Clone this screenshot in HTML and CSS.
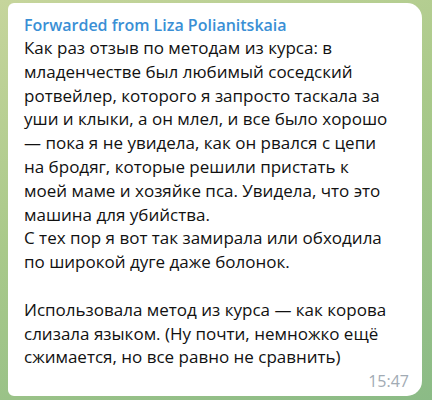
FILE: index.html
```html
<!DOCTYPE html>
<html lang="ru">
<head>
<meta charset="utf-8">
<link rel="stylesheet" href="styles.css">
</head>
<body>
<div class="bubble">
  <div class="fwd">Forwarded from Liza Polianitskaia</div>
  <div class="text">Как раз отзыв по методам из курса: в<br>младенчестве был любимый соседский<br>ротвейлер, которого я запросто таскала за<br>уши и клыки, а он млел, и все было хорошо<br>— пока я не увидела, как он рвался с цепи<br>на бродяг, которые решили пристать к<br>моей маме и хозяйке пса. Увидела, что это<br>машина для убийства.<br>С тех пор я вот так замирала или обходила<br>по широкой дуге даже болонок.<br><br>Использовала метод из курса — как корова<br>слизала языком. (Ну почти, немножко ещё<br>сжимается, но все равно не сравнить)</div>
  <div class="meta"><span class="time">15:47</span></div>
</div>
</body>
</html>
```

FILE: styles.css
```css
html, body {
  margin: 0;
  padding: 0;
}
body {
  width: 432px;
  height: 400px;
  overflow: hidden;
  background: linear-gradient(160deg, #c6d59c 0%, #a9c98a 45%, #8bbb86 100%);
  font-family: "Open Sans", "DejaVu Sans", sans-serif;
}
.bubble {
  box-sizing: border-box;
  margin: 3px 0 0 8px;
  width: 414px;
  height: 393px;
  background: #ffffff;
  border-radius: 6px 15px 15px 6px;
  padding: 11px 13px 0 16px;
  display: flex;
  flex-direction: column;
}
.fwd {
  font-size: 16px;
  font-weight: 600;
  line-height: 22px;
  color: #3a8fd5;
  white-space: nowrap;
}
.text {
  font-size: 17px;
  line-height: 23.8px;
  color: #111111;
  white-space: nowrap;
}
.meta {
  display: flex;
  justify-content: flex-end;
  margin-top: 1px;
}
.time {
  font-size: 16px;
  line-height: 22px;
  color: #a2abb4;
}
```
